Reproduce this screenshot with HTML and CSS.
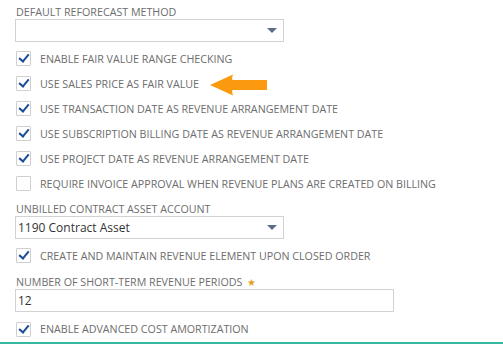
FILE: index.html
```html
<!DOCTYPE html>
<html lang="en">
<head>
    <meta charset="UTF-8">
    <meta name="viewport" content="width=device-width, initial-scale=1.0">
    <title>Revenue Recognition Preferences</title>
    <link rel="stylesheet" href="styles.css">
</head>
<body>
    <div class="prefs">
        <div class="field">
            <label class="field-label">DEFAULT REFORECAST METHOD</label>
            <div class="select"><span class="select-value"></span><span class="caret"></span></div>
        </div>

        <div class="checks">
            <div class="check-row"><span class="box checked"></span>ENABLE FAIR VALUE RANGE CHECKING</div>
            <div class="check-row"><span class="box checked"></span>USE SALES PRICE AS FAIR VALUE</div>
            <div class="check-row"><span class="box checked"></span>USE TRANSACTION DATE AS REVENUE ARRANGEMENT DATE</div>
            <div class="check-row"><span class="box checked"></span>USE SUBSCRIPTION BILLING DATE AS REVENUE ARRANGEMENT DATE</div>
            <div class="check-row"><span class="box checked"></span>USE PROJECT DATE AS REVENUE ARRANGEMENT DATE</div>
            <div class="check-row"><span class="box"></span>REQUIRE INVOICE APPROVAL WHEN REVENUE PLANS ARE CREATED ON BILLING</div>
        </div>

        <div class="field field-gap">
            <label class="field-label">UNBILLED CONTRACT ASSET ACCOUNT</label>
            <div class="select"><span class="select-value">1190 Contract Asset</span><span class="caret"></span></div>
        </div>
        <div class="check-row single"><span class="box checked"></span>CREATE AND MAINTAIN REVENUE ELEMENT UPON CLOSED ORDER</div>

        <div class="field field-gap2">
            <label class="field-label">NUMBER OF SHORT-TERM REVENUE PERIODS <span class="req">&#9733;</span></label>
            <div class="text-input">12</div>
        </div>
        <div class="check-row last"><span class="box checked"></span>ENABLE ADVANCED COST AMORTIZATION</div>
    </div>
    <div class="footer-line"></div>

    <svg class="pointer" width="60" height="24" viewBox="0 0 60 24">
        <path d="M1 12 L24 1.5 Q22.5 6 23.5 7 L58 7 L58 17 L23.5 17 Q22.5 18 24 22.5 Z" fill="#fb9a0e"/>
    </svg>
</body>
</html>
```

FILE: styles.css
```css
body {
    margin: 0;
    font-family: "Open Sans", "Liberation Sans", sans-serif;
    color: #6d6d6d;
    background: #fff;
    width: 503px;
    height: 345px;
    overflow: hidden;
    position: relative;
}
.prefs {
    padding: 5px 0 0 15px;
    display: flex;
    flex-direction: column;
}
.field {
    display: flex;
    flex-direction: column;
}
.field-gap {
    margin-top: 6px;
}
.field-gap2 {
    margin-top: 7px;
}
.field-label {
    font-size: 10.7px;
    line-height: 14px;
    padding-left: 1px;
}
.req {
    color: #e3a21a;
    font-size: 10px;
    margin-left: 2px;
}
.select {
    width: 267px;
    height: 21px;
    border: 1px solid #d2d2d2;
    display: flex;
    align-items: center;
    justify-content: space-between;
}
.select-value, .text-input {
    font-size: 12px;
    color: #333;
    padding-left: 2px;
}
.caret {
    width: 0;
    height: 0;
    border-left: 5px solid transparent;
    border-right: 5px solid transparent;
    border-top: 5px solid #5d6b8c;
    margin-right: 6px;
}
.text-input {
    width: 375px;
    height: 21px;
    line-height: 21px;
    border: 1px solid #d2d2d2;
}
.checks {
    margin-top: 4px;
    display: flex;
    flex-direction: column;
}
.check-row {
    height: 25px;
    display: flex;
    align-items: center;
    font-size: 10.7px;
}
.check-row.single {
    margin-top: 4px;
}
.check-row.last {
    margin-top: 5px;
    height: 24px;
}
.box {
    width: 13px;
    height: 13px;
    border: 1px solid #cfcfcf;
    border-radius: 1px;
    margin-right: 9px;
    margin-left: 1px;
    position: relative;
    flex-shrink: 0;
}
.box.checked::after {
    content: "";
    position: absolute;
    left: 4px;
    top: 0px;
    width: 4px;
    height: 8px;
    border-right: 2.5px solid #1b4c96;
    border-bottom: 2.5px solid #1b4c96;
    transform: rotate(40deg);
}
.footer-line {
    position: absolute;
    left: 0;
    right: 0;
    top: 342px;
    height: 2px;
    background: #36b8a0;
}
.pointer {
    position: absolute;
    left: 209px;
    top: 73px;
}
```
